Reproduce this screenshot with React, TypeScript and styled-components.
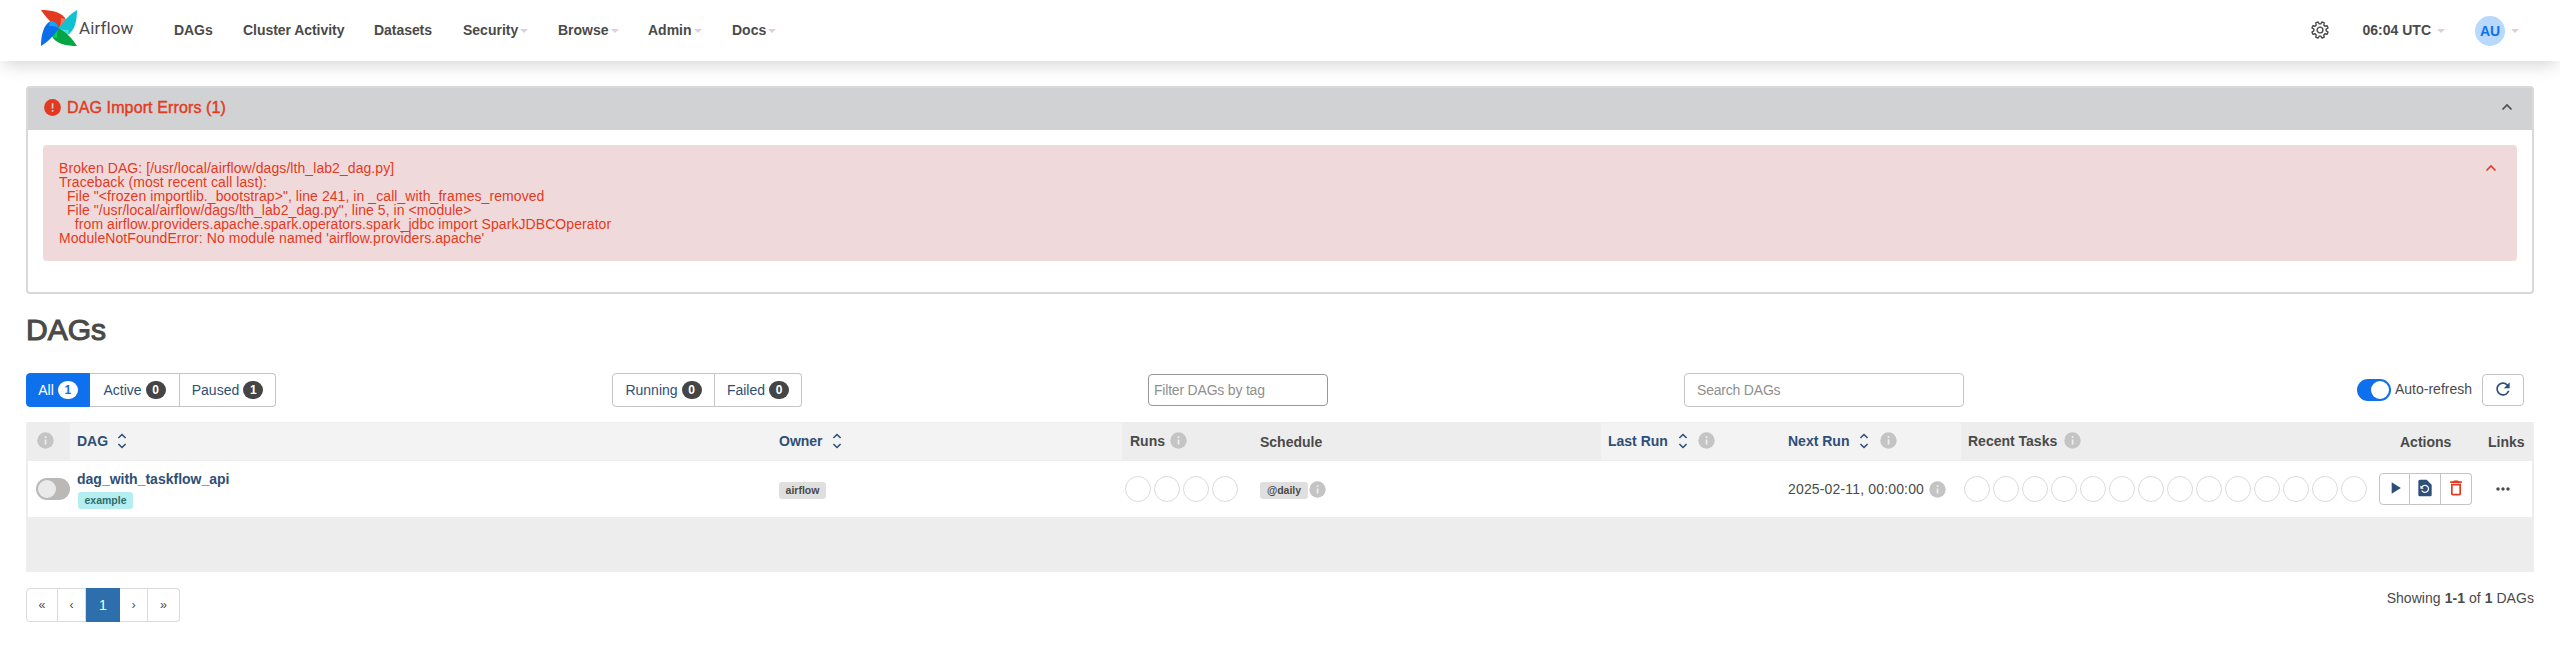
import React from "react";
import styled, { createGlobalStyle } from "styled-components";

const Global = createGlobalStyle`
  * { box-sizing: border-box; }
  body { margin: 0; background: #fff; color: #4a4a49; font: 14px/20px "Liberation Sans", Arial, sans-serif; }
  button { font: inherit; margin: 0; padding: 0; }
`;

const Label = styled.span<{ $ls?: number; $medium?: boolean }>`
  white-space: nowrap;
  letter-spacing: ${(p) => p.$ls ?? 0}px;
  ${(p) => p.$medium && "-webkit-text-stroke: 0.4px currentColor;"}
`;

const Navbar = styled.nav`
  height: 61px;
  display: flex;
  align-items: flex-start;
  justify-content: space-between;
  background: #fff;
  box-shadow: 0 8px 16px -4px rgba(0, 0, 0, 0.17);
`;
const NavLeft = styled.div`
  display: flex;
  height: 60px;
  align-items: center;
  padding-left: 41px;
`;
const Brand = styled.a`
  display: flex;
  align-items: flex-start;
  width: 118px;
  height: 60px;
  padding-top: 10px;
`;
const BrandName = styled.span`
  font: 17px/20px Roboto, sans-serif;
  letter-spacing: 0.1px;
  margin: 8px 0 0 2px;
`;
const NavItem = styled.a<{ $w: number }>`
  display: flex;
  align-items: center;
  width: ${(p) => p.$w}px;
  padding-left: 15px;
  gap: 2px;
  font-weight: 700;
`;
const Caret = styled.span`
  width: 0;
  border: 4px solid transparent;
  border-top-color: #e0cde0;
  border-bottom: 0;
  margin-top: 1px;
`;
const NavRight = styled.div`
  display: flex;
  height: 60px;
  align-items: center;
  padding-right: 41px;
`;
const Clock = styled.div`
  display: flex;
  align-items: center;
  gap: 6px;
  margin: 0 30px 0 34px;
  font-weight: 700;
`;
const Avatar = styled.div`
  width: 30px;
  height: 30px;
  border-radius: 50%;
  background: #b8d9fb;
  color: #0f70ee;
  font-weight: 700;
  line-height: 31px;
  text-align: center;
  margin: 2px 6px 0 0;
`;

const Main = styled.main`
  padding: 25px 26px 0;
`;
const ErrorPanel = styled.section`
  height: 208px;
  border: 2px solid #d9d9d9;
  border-radius: 4px;
`;
const ErrorHead = styled.header`
  height: 42px;
  display: flex;
  align-items: center;
  justify-content: space-between;
  padding: 0 19px 3px 16px;
  background: #d1d2d4;
  color: #e43921;
  font-size: 16px;
`;
const ErrorTitle = styled.div`
  display: flex;
  align-items: center;
  gap: 6px;
`;
const Alert = styled.div`
  display: flex;
  justify-content: space-between;
  height: 116px;
  margin: 15px;
  padding: 16px 20px 0 16px;
  border-radius: 4px;
  background: #f0d9db;
  color: #e43921;
`;
const Trace = styled.pre`
  margin: 0;
  font: 14px/14px "Liberation Sans", Arial, sans-serif;
  letter-spacing: 0.07px;
`;
const AlertToggle = styled.span`
  width: 12px;
  line-height: 16px;
`;
const Title = styled.h2`
  margin: 19px 0 0;
  height: 34px;
  font-size: 30px;
  line-height: 33px;
  font-weight: 400;
  -webkit-text-stroke: 1.1px currentColor;
`;

const Toolbar = styled.div`
  display: grid;
  grid-template-columns: 586px 536px 536px 1fr;
  align-items: center;
  height: 34px;
  margin-top: 26px;
`;
const Group = styled.div`
  display: flex;
  height: 34px;
`;
const FilterButton = styled.button<{ $w: number; $active?: boolean }>`
  display: flex;
  align-items: center;
  justify-content: center;
  gap: 4px;
  width: ${(p) => p.$w}px;
  border: 1px solid ${(p) => (p.$active ? "#0f70ee" : "#c4c4c4")};
  background: ${(p) => (p.$active ? "#0f70ee" : "#fff")};
  color: ${(p) => (p.$active ? "#fff" : "#2e4f77")};
  &:first-child { border-radius: 4px 0 0 4px; }
  &:last-child { border-radius: 0 4px 4px 0; }
  & + & { border-left-width: 0; }
`;
const Count = styled.span<{ $active?: boolean }>`
  min-width: 20px;
  height: 18px;
  border-radius: 10px;
  background: ${(p) => (p.$active ? "#fff" : "#454545")};
  color: ${(p) => (p.$active ? "#0f70ee" : "#fff")};
  font-size: 12px;
  font-weight: 700;
  line-height: 18px;
`;
const Field = styled.input<{ $w: number; $h: number; $pad: number; $line: string }>`
  width: ${(p) => p.$w}px;
  height: ${(p) => p.$h}px;
  padding: 0 ${(p) => p.$pad}px;
  border: 1px solid ${(p) => p.$line};
  border-radius: 4px;
  font: 14px "Liberation Sans", Arial, sans-serif;
  letter-spacing: -0.2px;
  outline: 0;
  &::placeholder { color: #8f8f8f; opacity: 1; }
`;
const RefreshArea = styled.div`
  display: flex;
  align-items: center;
  justify-content: flex-end;
  padding-right: 10px;
`;
const RefreshLabel = styled(Label)`
  margin: 0 10px 2px 4px;
`;
const Switch = styled.span<{ $on?: boolean }>`
  display: flex;
  justify-content: ${(p) => (p.$on ? "flex-end" : "flex-start")};
  width: 34px;
  height: 22px;
  padding: 2px;
  border-radius: 11px;
  background: ${(p) => (p.$on ? "#0f70ee" : "#bbb9b7")};
  &::after {
    content: "";
    width: 18px;
    height: 18px;
    border-radius: 50%;
    background: ${(p) => (p.$on ? "#fff" : "#eaeaea")};
  }
`;
const IconButton = styled.button<{ $w: number; $h: number }>`
  display: flex;
  align-items: center;
  justify-content: center;
  width: ${(p) => p.$w}px;
  height: ${(p) => p.$h}px;
  padding-bottom: 2px;
  border: 1px solid #c4c4c4;
  border-radius: 4px;
  background: #fff;
`;

const Table = styled.div`
  margin-top: 15px;
  height: 150px;
  background: #ededed;
  border-radius: 2px 2px 0 0;
`;
const HeadRow = styled.div`
  display: grid;
  grid-template-columns: 44px 701px 351px 130px 349px 180px 180px 410px 109px 1fr;
  height: 39px;
  padding: 1px 0;
`;
const HeadCell = styled.div<{ $sort?: boolean; $pad?: number; $plain?: boolean }>`
  display: flex;
  align-items: center;
  padding: 0 0 ${(p) => (p.$plain ? 0 : 2)}px ${(p) => p.$pad ?? 8}px;
  background: ${(p) => (p.$sort ? "#f3f3f3" : "transparent")};
  color: ${(p) => (p.$sort ? "#2e4f77" : "#4a4a49")};
  font-weight: 700;
`;
const BodyRow = styled.div`
  display: grid;
  grid-template-columns: 42px 701px 351px 130px 349px 180px 180px 410px 109px 1fr;
  height: 56px;
  margin: 0 2px;
  background: #fff;
`;
const Cell = styled.div<{ $pad?: number }>`
  display: flex;
  align-items: center;
  padding-left: ${(p) => p.$pad ?? 8}px;
`;
const DagCell = styled.div`
  padding: 8px 0 0 8px;
`;
const DagLink = styled.a`
  display: block;
  margin-left: -1px;
  line-height: 20px;
  color: #2e4f77;
  font-weight: 700;
`;
const Tag = styled.span<{ $w: number; $tag?: boolean }>`
  display: block;
  width: ${(p) => p.$w}px;
  height: 17px;
  margin-top: ${(p) => (p.$tag ? 3 : 2)}px;
  border-radius: 3px;
  background: ${(p) => (p.$tag ? "#b5eef0" : "#dfdfdf")};
  color: ${(p) => (p.$tag ? "#2f6b6b" : "#4a4a49")};
  font-size: 10.5px;
  font-weight: 700;
  line-height: 17px;
  text-align: center;
`;
const Rings = styled.div`
  display: flex;
  gap: 3px;
`;
const Ring = styled.span`
  width: 26px;
  height: 26px;
  border: 1px solid #dadada;
  border-radius: 50%;
`;
const Gap = styled.span<{ $w: number }>`
  width: ${(p) => p.$w}px;
`;
const ActionGroup = styled.div`
  display: flex;
  ${IconButton}:not(:first-child) { border-left: 0; border-top-left-radius: 0; border-bottom-left-radius: 0; }
  ${IconButton}:not(:last-child) { border-top-right-radius: 0; border-bottom-right-radius: 0; }
`;

const Footer = styled.footer`
  display: flex;
  justify-content: space-between;
  margin-top: 16px;
`;
const Page = styled.button<{ $w: number; $current?: boolean }>`
  width: ${(p) => p.$w}px;
  height: 34px;
  border: 1px solid ${(p) => (p.$current ? "#2d6ead" : "#d9d9d9")};
  border-left-width: ${(p) => (p.$current ? 1 : 0)}px;
  background: ${(p) => (p.$current ? "#2d6ead" : "#fff")};
  color: ${(p) => (p.$current ? "#fff" : "#4a4a49")};
  font-size: ${(p) => (p.$current ? 14 : 12.5)}px;
  &:first-child { border-left-width: 1px; border-radius: 4px 0 0 4px; }
  &:last-child { border-radius: 0 4px 4px 0; }
`;
const Summary = styled.p`
  margin: 0;
  line-height: 20px;
  letter-spacing: 0.05px;
`;

/* Pinwheel: one two-tone petal repeated every quarter turn */
const petals = [
  ["#e43921", "#ff7557"],
  ["#11c1cf", "#3fdfe5"],
  ["#04a544", "#05d05c"],
  ["#0d6eeb", "#11a7f5"],
];
const Logo = () => (
  <svg width="36" height="36" viewBox="0 0 36 36">
    {petals.map(([base, light], i) => (
      <g key={base} transform={`rotate(${i * 90} 18 18)`}>
        <path d="M0 0C10 0 22 2 25.300 10.500C24.500 13 22 16 18 18C10 13 4.500 7 0 0Z" fill={base} />
        <path d="M25.300 10.500C24.500 14 21 17 18 18C19.500 15 20.500 12 19.800 8.500C22.500 8 24.500 8.600 25.300 10.500Z" fill={light} />
      </g>
    ))}
  </svg>
);

const gearPoints = Array.from({ length: 8 }, (_, i) =>
  [
    [-15, 6.2],
    [-8.5, 8.3],
    [8.5, 8.3],
    [15, 6.2],
  ].map(([offset, r]) => {
    const a = ((i * 45 + 22.5 + offset) * Math.PI) / 180;
    return `${(9 + r * Math.sin(a)).toFixed(2)},${(9 - r * Math.cos(a)).toFixed(2)}`;
  }).join(" ")
).join(" ");
const Gear = () => (
  <svg width="18" height="18" viewBox="0 0 18 18" fill="none" stroke="#4a4a49" strokeWidth="1.4" strokeLinejoin="round">
    <polygon points={gearPoints} />
    <circle cx="9" cy="9" r="2.900" />
  </svg>
);
const Chevron = ({ color }: { color: string }) => (
  <svg width="12" height="10" viewBox="0 0 12 10" fill="none" stroke={color} strokeWidth="1.6">
    <path d="m1.500 6.500 4.500-4.500 4.500 4.500" />
  </svg>
);
const Sort = () => (
  <svg width="10" height="16" viewBox="0 0 10 16" fill="none" stroke="#2e4f77" strokeWidth="1.6">
    <path d="m1.400 5 3.600-3.500L8.600 5M1.400 11 5 14.500 8.600 11" />
  </svg>
);
const Info = () => (
  <svg width="17" height="17" viewBox="0 0 17 17">
    <circle cx="8.500" cy="8.500" r="8.200" fill="#c4c4c4" />
    <path d="M7.700 7.600h1.700v5H7.700zM7.700 4.300h1.700V6H7.700z" fill="#efefef" />
  </svg>
);
const Alarm = () => (
  <svg width="17" height="17" viewBox="0 0 17 17">
    <circle cx="8.500" cy="8.500" r="8.400" fill="#e43921" />
    <path d="M7.700 4.300h1.700v5.200H7.700zM7.700 11h1.700v1.700H7.700z" fill="#d1d2d4" />
  </svg>
);
const Material = ({ d, color, size }: { d: string; color: string; size: number }) => (
  <svg width={size} height={size} viewBox="0 0 24 24" fill={color}>
    <path d={d} />
  </svg>
);
const paths = {
  refresh: "M17.650 6.350A7.958 7.958 0 0 0 12 4c-4.420 0-7.990 3.580-7.990 8s3.570 8 7.990 8c3.730 0 6.840-2.550 7.730-6h-2.080A5.990 5.990 0 0 1 12 18c-3.310 0-6-2.690-6-6s2.690-6 6-6c1.660 0 3.140.69 4.220 1.780L13 11h7V4l-2.350 2.350z",
  play: "M8 5v14l11-7z",
  restore: "M14 2H6c-1.100 0-1.990.9-1.990 2L4 20c0 1.100.89 2 1.990 2H18c1.100 0 2-.9 2-2V8l-6-6zm-2 16c-2.050 0-3.810-1.240-4.580-3h1.710c.63.9 1.680 1.500 2.870 1.500 1.930 0 3.500-1.570 3.500-3.500S13.930 9.500 12 9.500c-1.350 0-2.520.78-3.100 1.900l1.600 1.600h-4V9l1.300 1.300C8.690 8.920 10.230 8 12 8c2.760 0 5 2.240 5 5s-2.240 5-5 5z",
  trash: "M6 19c0 1.100.9 2 2 2h8c1.100 0 2-.9 2-2V7H6v12zM8 9h8v10H8V9zm7.500-5-1-1h-5l-1 1H5v2h14V4z",
  dots: "M6 10c-1.100 0-2 .9-2 2s.9 2 2 2 2-.9 2-2-.9-2-2-2zm12 0c-1.100 0-2 .9-2 2s.9 2 2 2 2-.9 2-2-.9-2-2-2zm-6 0c-1.100 0-2 .9-2 2s.9 2 2 2 2-.9 2-2-.9-2-2-2z",
};

const nav = [
  { text: "DAGs", w: 69 },
  { text: "Cluster Activity", w: 131 },
  { text: "Datasets", w: 89 },
  { text: "Security", w: 95, menu: true },
  { text: "Browse", w: 90, menu: true },
  { text: "Admin", w: 84, menu: true },
  { text: "Docs", w: 75, menu: true },
];

const trace = `Broken DAG: [/usr/local/airflow/dags/lth_lab2_dag.py]
Traceback (most recent call last):
  File "<frozen importlib._bootstrap>", line 241, in _call_with_frames_removed
  File "/usr/local/airflow/dags/lth_lab2_dag.py", line 5, in <module>
    from airflow.providers.apache.spark.operators.spark_jdbc import SparkJDBCOperator
ModuleNotFoundError: No module named 'airflow.providers.apache'`;

const RingRow = ({ count }: { count: number }) => (
  <Rings>
    {Array.from({ length: count }, (_, i) => (
      <Ring key={i} />
    ))}
  </Rings>
);

export default function App() {
  return (
    <>
      <Global />
      <Navbar>
        <NavLeft>
          <Brand>
            <Logo />
            <BrandName>Airflow</BrandName>
          </Brand>
          {nav.map((n) => (
            <NavItem key={n.text} $w={n.w}>
              <Label $ls={n.menu ? 0 : -0.05}>{n.text}</Label>
              {n.menu && <Caret />}
            </NavItem>
          ))}
        </NavLeft>
        <NavRight>
          <Gear />
          <Clock>
            <Label>06:04 UTC</Label>
            <Caret />
          </Clock>
          <Avatar>AU</Avatar>
          <Caret />
        </NavRight>
      </Navbar>
      <Main>
        <ErrorPanel>
          <ErrorHead>
            <ErrorTitle>
              <Alarm />
              <Label $ls={0.12} $medium>
                DAG Import Errors (1)
              </Label>
            </ErrorTitle>
            <Chevron color="#4a4a49" />
          </ErrorHead>
          <Alert>
            <Trace>{trace}</Trace>
            <AlertToggle>
              <Chevron color="#e43921" />
            </AlertToggle>
          </Alert>
        </ErrorPanel>
        <Title>DAGs</Title>
        <Toolbar>
          <Group>
            <FilterButton $w={64} $active>
              All<Count $active>1</Count>
            </FilterButton>
            <FilterButton $w={90}>
              Active<Count>0</Count>
            </FilterButton>
            <FilterButton $w={96}>
              Paused<Count>1</Count>
            </FilterButton>
          </Group>
          <Group>
            <FilterButton $w={103}>
              Running<Count>0</Count>
            </FilterButton>
            <FilterButton $w={87}>
              Failed<Count>0</Count>
            </FilterButton>
          </Group>
          <Field $w={180} $h={32} $pad={5} $line="#979797" placeholder="Filter DAGs by tag" />
          <Group>
            <Field $w={280} $h={34} $pad={12} $line="#c4c4c4" placeholder="Search DAGs" />
            <Gap $w={393} />
            <RefreshArea>
              <Switch $on />
              <RefreshLabel>Auto-refresh</RefreshLabel>
              <IconButton $w={42} $h={32}>
                <Material d={paths.refresh} color="#2e4f77" size={20} />
              </IconButton>
            </RefreshArea>
          </Group>
        </Toolbar>
        <Table>
          <HeadRow>
            <HeadCell $pad={11}>
              <Info />
            </HeadCell>
            <HeadCell $sort $pad={7}>
              DAG
              <Gap $w={9} />
              <Sort />
            </HeadCell>
            <HeadCell $sort>
              Owner
              <Gap $w={9} />
              <Sort />
            </HeadCell>
            <HeadCell>
              Runs
              <Gap $w={5} />
              <Info />
            </HeadCell>
            <HeadCell $plain>Schedule</HeadCell>
            <HeadCell $sort $pad={7}>
              Last Run
              <Gap $w={10} />
              <Sort />
              <Gap $w={10} />
              <Info />
            </HeadCell>
            <HeadCell $sort $pad={7}>
              Next Run
              <Gap $w={10} />
              <Sort />
              <Gap $w={11} />
              <Info />
            </HeadCell>
            <HeadCell $pad={7}>
              Recent Tasks
              <Gap $w={7} />
              <Info />
            </HeadCell>
            <HeadCell $pad={29} $plain>
              Actions
            </HeadCell>
            <HeadCell $plain>Links</HeadCell>
          </HeadRow>
          <BodyRow>
            <Cell>
              <Switch />
            </Cell>
            <DagCell>
              <DagLink>dag_with_taskflow_api</DagLink>
              <Tag $w={55} $tag>
                example
              </Tag>
            </DagCell>
            <Cell>
              <Tag $w={47}>airflow</Tag>
            </Cell>
            <Cell $pad={3}>
              <RingRow count={4} />
            </Cell>
            <Cell>
              <Tag $w={48}>@daily</Tag>
              <Gap $w={1} />
              <Info />
            </Cell>
            <Cell />
            <Cell $pad={7}>
              <Label $ls={0.16}>2025-02-11, 00:00:00</Label>
              <Gap $w={5} />
              <Info />
            </Cell>
            <Cell $pad={3}>
              <RingRow count={14} />
            </Cell>
            <Cell>
              <ActionGroup>
                <IconButton $w={31} $h={32}>
                  <Material d={paths.play} color="#2e4f77" size={20} />
                </IconButton>
                <IconButton $w={31} $h={32}>
                  <Material d={paths.restore} color="#2e4f77" size={20} />
                </IconButton>
                <IconButton $w={31} $h={32}>
                  <Material d={paths.trash} color="#e43921" size={20} />
                </IconButton>
              </ActionGroup>
            </Cell>
            <Cell $pad={13}>
              <Material d={paths.dots} color="#4a4a49" size={20} />
            </Cell>
          </BodyRow>
        </Table>
        <Footer>
          <Group>
            <Page $w={32}>«</Page>
            <Page $w={28}>‹</Page>
            <Page $w={34} $current>
              1
            </Page>
            <Page $w={28}>›</Page>
            <Page $w={32}>»</Page>
          </Group>
          <Summary>
            Showing <b>1-1</b> of <b>1</b> DAGs
          </Summary>
        </Footer>
      </Main>
    </>
  );
}
